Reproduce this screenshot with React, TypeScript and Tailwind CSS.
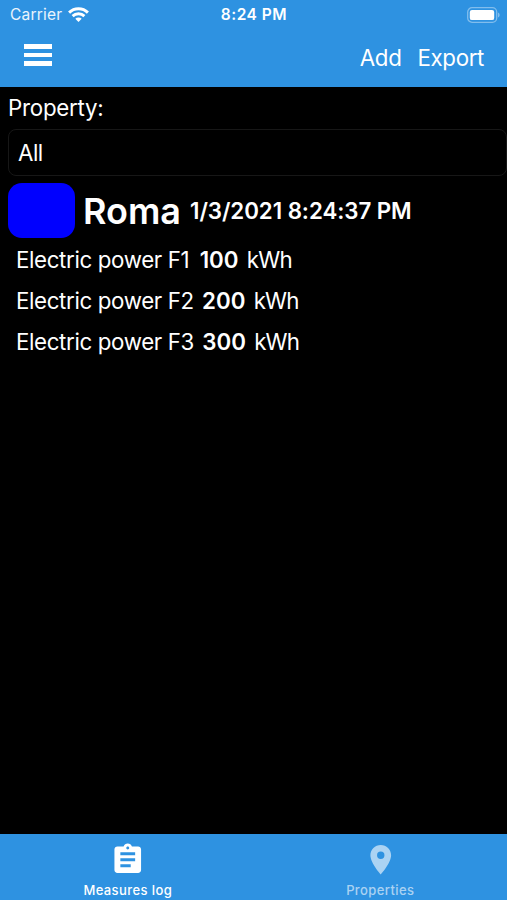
import { MdAssignment, MdPlace } from 'react-icons/md';

const measures = [
  { name: 'Electric power F1', value: 100, unit: 'kWh' },
  { name: 'Electric power F2', value: 200, unit: 'kWh' },
  { name: 'Electric power F3', value: 300, unit: 'kWh' },
];

const tabs = [
  { label: 'Measures log', icon: MdAssignment, active: true },
  { label: 'Properties', icon: MdPlace, active: false },
];

function WifiIcon() {
  return (
    <svg width="21" height="15" viewBox="0 0 21 15" fill="none" stroke="white" strokeWidth="2.9">
      <path d="M1.1 5.6a13.3 13.3 0 0 1 18.8 0" />
      <path d="M4.6 9.1a8.4 8.4 0 0 1 11.8 0" />
      <path d="M10.5 15l-3.2-3.2a4.5 4.5 0 0 1 6.4 0z" fill="white" stroke="none" />
    </svg>
  );
}

function BatteryIcon() {
  return (
    <svg width="34" height="16" viewBox="0 0 34 16" fill="none">
      <rect x="0.7" y="0.7" width="29" height="14.6" rx="4.4" stroke="white" strokeOpacity="0.4" strokeWidth="1.3" />
      <rect x="2.8" y="2.9" width="24.4" height="10.2" rx="2.2" fill="white" />
      <path d="M31 5.5c2.2.8 2.2 4.2 0 5z" fill="white" fillOpacity="0.4" />
    </svg>
  );
}

function StatusBar() {
  return (
    <div className="grid h-[29px] grid-cols-3 items-center px-[6px] text-[15.5px]">
      <div className="flex items-center gap-[6px] pl-1 text-white/90">
        <span className="tracking-[0.2px]">Carrier</span>
        <WifiIcon />
      </div>
      <span className="pt-px pl-px text-center font-semibold tracking-[0.5px]">8:24 PM</span>
      <div className="flex justify-end">
        <BatteryIcon />
      </div>
    </div>
  );
}

export default function App() {
  return (
    <div className="flex h-[900px] w-[507px] flex-col overflow-hidden whitespace-nowrap bg-black font-['Inter',sans-serif] text-[22.3px] text-white">
      <header className="h-[87px] bg-[#2e92e1]">
        <StatusBar />
        <div className="flex h-[58px] items-center justify-between pl-6 pr-[23px]">
          <button className="mb-[6px] flex flex-col gap-[4px]">
            <span className="h-[4.5px] w-[28px] bg-white" />
            <span className="h-[4.5px] w-[28px] bg-white" />
            <span className="h-[4.5px] w-[28px] bg-white" />
          </button>
          <div className="flex gap-4 tracking-[-0.35px]">
            <button>Add</button>
            <button>Export</button>
          </div>
        </div>
      </header>

      <main className="flex-1">
        <div className="flex h-[42px] items-center pl-2 tracking-[-0.25px]">Property:</div>
        <div className="ml-2 flex h-[47px] items-center rounded-[8px] border-[1.5px] border-[#171717] pl-[9px] tracking-[-0.5px]">
          All
        </div>
        <div className="mt-[7px] flex h-[55px] items-center pl-2">
          <div className="h-[55px] w-[67px] rounded-[14px] bg-[#0000ff]" />
          <span className="ml-2 text-[36px] font-semibold">Roma</span>
          <span className="ml-[9px] font-semibold tracking-[-0.05px]">1/3/2021 8:24:37 PM</span>
        </div>
        <ul className="pt-px pl-4">
          {measures.map(({ name, value, unit }) => (
            <li key={name} className="flex h-[41px] items-center gap-[8.3px]">
              <span className="tracking-[-0.36px]">{name}</span>
              <span className="min-w-[41px] text-right font-semibold">{value}</span>
              <span className="tracking-[-0.8px]">{unit}</span>
            </li>
          ))}
        </ul>
      </main>

      <nav className="grid h-[66px] grid-cols-2 bg-[#2e92e1]">
        {tabs.map(({ label, icon: Icon, active }) => (
          <button
            key={label}
            className={`${active ? 'pl-[2px] text-white' : 'text-white/60'} flex flex-col items-center pt-[8px]`}
          >
            <Icon className="h-[35.5px] w-[35.5px]" />
            <span className="mt-[4px] text-[13px] font-medium leading-[16px] tracking-[0.4px]">{label}</span>
          </button>
        ))}
      </nav>
    </div>
  );
}
